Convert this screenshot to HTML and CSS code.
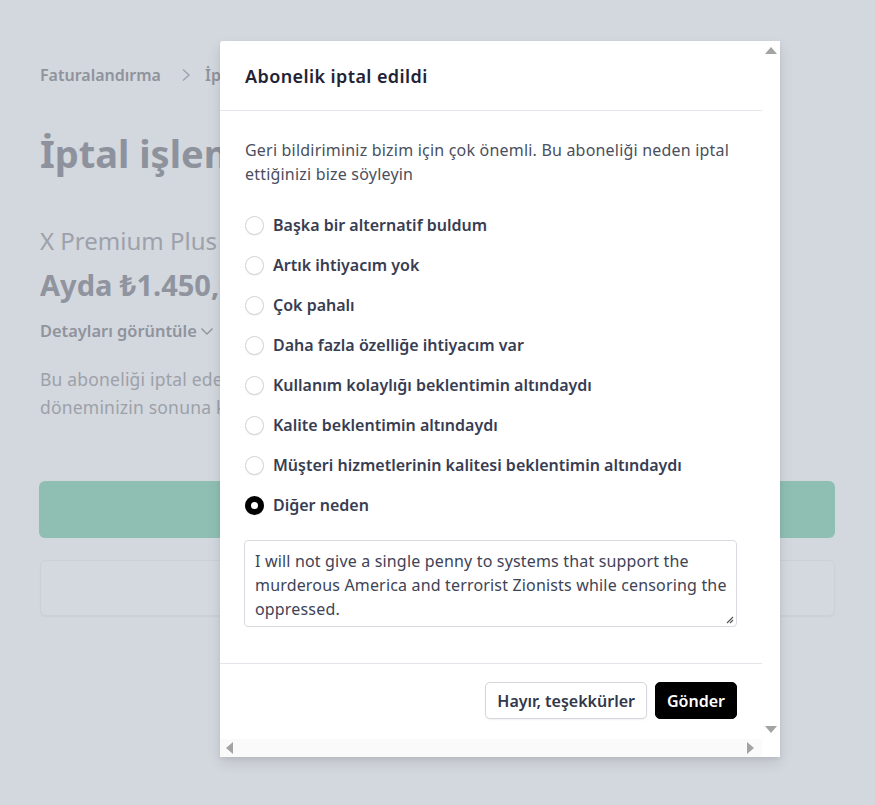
FILE: index.html
```html
<!DOCTYPE html>
<html lang="tr">
<head>
<meta charset="utf-8">
<title>Abonelik iptal</title>
<link rel="stylesheet" href="styles.css">
</head>
<body>
<main class="page">
  <nav class="crumbs clip">
    <span>Faturalandırma</span>
    <svg class="chev" width="14" height="14" viewBox="0 0 14 14"><path d="M4 1.5 L10 7 L4 12.5" fill="none" stroke="#a0a5ae" stroke-width="1.5"/></svg>
    <span>İptal işlemi</span>
  </nav>
  <h1 class="title clip">İptal işlemini tamamla</h1>
  <div class="plan clip">X Premium Plus</div>
  <div class="price clip">Ayda ₺1.450,00</div>
  <div class="details">Detayları görüntüle
    <svg width="14" height="10" viewBox="0 0 14 10"><path d="M1.5 2.5 L7 8 L12.5 2.5" fill="none" stroke="#8f939d" stroke-width="1.4"/></svg>
  </div>
  <p class="info clip">Bu aboneliği iptal ederseniz, aboneliğiniz mevcut fatura<br>döneminizin sonuna kadar geçerli olmaya devam edecektir.</p>
  <div class="btn-primary"></div>
  <div class="btn-outline"></div>
</main>

<div class="modal">
  <div class="modal-scroll">
    <header class="modal-head">Abonelik iptal edildi</header>
    <section class="modal-body">
      <p class="lead">Geri bildiriminiz bizim için çok önemli. Bu aboneliği neden iptal ettiğinizi bize söyleyin</p>
      <ul class="options">
        <li><span class="radio"></span>Başka bir alternatif buldum</li>
        <li><span class="radio"></span>Artık ihtiyacım yok</li>
        <li><span class="radio"></span>Çok pahalı</li>
        <li><span class="radio"></span>Daha fazla özelliğe ihtiyacım var</li>
        <li><span class="radio"></span>Kullanım kolaylığı beklentimin altındaydı</li>
        <li><span class="radio"></span>Kalite beklentimin altındaydı</li>
        <li><span class="radio"></span>Müşteri hizmetlerinin kalitesi beklentimin altındaydı</li>
        <li><span class="radio checked"></span>Diğer neden</li>
      </ul>
      <div class="textarea">I will not give a single penny to systems that support the murderous America and terrorist Zionists while censoring the oppressed.
        <svg class="grip" width="9" height="9" viewBox="0 0 9 9"><path d="M8 2 L2 8 M8 5 L5 8" stroke="#555" stroke-width="1.1"/></svg>
      </div>
    </section>
    <footer class="modal-foot">
      <button class="btn-no">Hayır, teşekkürler</button>
      <button class="btn-send">Gönder</button>
    </footer>
  </div>
  <div class="vbar">
    <span class="arr up"></span>
    <span class="arr down"></span>
  </div>
  <div class="hbar">
    <span class="arr left"></span>
    <span class="arr right"></span>
  </div>
  <div class="corner"></div>
</div>
</body>
</html>
```
FILE: styles.css
```css
* { box-sizing: border-box; }
html, body { margin: 0; padding: 0; }
body {
  background: #d3d7de;
  font-family: "Noto Sans", "Open Sans", sans-serif;
  width: 875px;
  height: 805px;
  overflow: hidden;
  position: relative;
}
.page {
  padding: 60px 0 0 40px;
  display: flex;
  flex-direction: column;
  width: 835px;
}
.clip {
  max-width: 180px;
  overflow: hidden;
  white-space: nowrap;
}
.crumbs {
  display: flex;
  align-items: center;
  gap: 16px;
  font-size: 16px;
  font-weight: 600;
  color: #8e939c;
  height: 30px;
}
.crumbs > * { flex: none; }
.chev { margin: 0 -4px 0 2px; }
.title {
  margin: 37px 0 0;
  font-size: 38px;
  line-height: 52px;
  font-weight: 700;
  color: #8d929c;
}
.plan {
  margin-top: 46px;
  font-size: 24px;
  line-height: 32px;
  color: #9da1aa;
}
.price {
  margin-top: 10px;
  font-size: 29px;
  line-height: 36px;
  font-weight: 700;
  color: #8f949e;
}
.details {
  margin-top: 16px;
  font-size: 16.4px;
  font-weight: 600;
  color: #8f939d;
  line-height: 24px;
  display: flex;
  align-items: center;
  gap: 3px;
}
.info {
  margin: 22px 0 0;
  font-size: 17.5px;
  letter-spacing: 0.2px;
  line-height: 28px;
  color: #9ca1a9;
}
.btn-primary {
  margin-top: 60px;
  height: 57px;
  border-radius: 6px;
  background: #8fbfb3;
  margin-left: -1px;
}
.btn-outline {
  margin-top: 22px;
  height: 56px;
  border-radius: 6px;
  border: 1px solid #ccd0d7;
  background: #d4d8df;
  box-shadow: 0 1px 2px rgba(0,0,0,0.04);
}

/* modal */
.modal {
  position: absolute;
  left: 220px;
  top: 41px;
  width: 560px;
  height: 716px;
  background: #fff;
  display: grid;
  grid-template-columns: 1fr 18px;
  grid-template-rows: 1fr 18px;
  box-shadow: 0 6px 14px rgba(0,0,0,0.10), 0 2px 4px rgba(0,0,0,0.06);
  border-radius: 3px 0 0 0;
  overflow: hidden;
}
.modal-scroll {
  overflow: hidden;
  display: flex;
  flex-direction: column;
}
.modal-head {
  height: 70px;
  border-bottom: 1px solid #e4e6eb;
  padding: 0 25px;
  display: flex;
  align-items: center;
  font-size: 18px;
  letter-spacing: 0.4px;
  font-weight: 600;
  color: #1f2335;
}
.modal-body {
  padding: 27px 25px 36px;
  border-bottom: 1px solid #e4e6eb;
}
.lead {
  margin: 0;
  font-size: 16px;
  letter-spacing: 0.2px;
  line-height: 24px;
  color: #4a4f5e;
}
.options {
  list-style: none;
  margin: 27px 0 0;
  padding: 0;
  display: flex;
  flex-direction: column;
  gap: 16px;
}
.options li {
  display: flex;
  align-items: center;
  gap: 9px;
  font-size: 16px;
  font-weight: 600;
  line-height: 24px;
  color: #383d52;
  white-space: nowrap;
}
.radio {
  width: 19px;
  height: 19px;
  border-radius: 50%;
  border: 1px solid #cfd2d8;
  background: #fff;
  box-shadow: 0 1px 1px rgba(0,0,0,0.06);
  flex: none;
}
.radio.checked {
  border: 6px solid #000;
  background: #fff;
}
.textarea {
  position: relative;
  margin-top: 23px;
  height: 87px;
  border: 1px solid #d9dbe0;
  border-radius: 4px;
  padding: 8px 6px 8px 10px;
  font-size: 16px;
  letter-spacing: 0.17px;
  line-height: 24px;
  color: #3e4356;
  margin-left: -1px;
}
.grip {
  position: absolute;
  right: 2px;
  bottom: 2px;
}
.modal-foot {
  display: flex;
  justify-content: flex-end;
  gap: 8px;
  padding: 18px 25px 0;
}
.modal-foot button {
  font-family: inherit;
  font-size: 16px;
  font-weight: 600;
  height: 37px;
  border-radius: 5px;
  padding: 0 11px;
  cursor: pointer;
}
.btn-no {
  background: #fff;
  border: 1px solid #d3d6dc;
  color: #323749;
  box-shadow: 0 1px 2px rgba(0,0,0,0.06);
}
.btn-send {
  background: #000;
  border: 1px solid #000;
  color: #fff;
}

/* fake scrollbars */
.vbar, .hbar, .corner { background: #fafafa; position: relative; }
.vbar { background: #fff; }
.corner { background: #fff; }
.arr {
  position: absolute;
  width: 0;
  height: 0;
  border: 5px solid transparent;
}
.arr.up { top: 6px; left: 3px; border-bottom: 7px solid #a3a3a3; border-top: 0; border-left-width: 6px; border-right-width: 6px; }
.arr.down { bottom: 6px; left: 3px; border-top: 7px solid #a3a3a3; border-bottom: 0; border-left-width: 6px; border-right-width: 6px; }
.arr.left { left: 6px; top: 3px; border-right: 7px solid #a3a3a3; border-left: 0; border-top-width: 6px; border-bottom-width: 6px; }
.arr.right { right: 8px; top: 3px; border-left: 7px solid #a3a3a3; border-right: 0; border-top-width: 6px; border-bottom-width: 6px; }
```
